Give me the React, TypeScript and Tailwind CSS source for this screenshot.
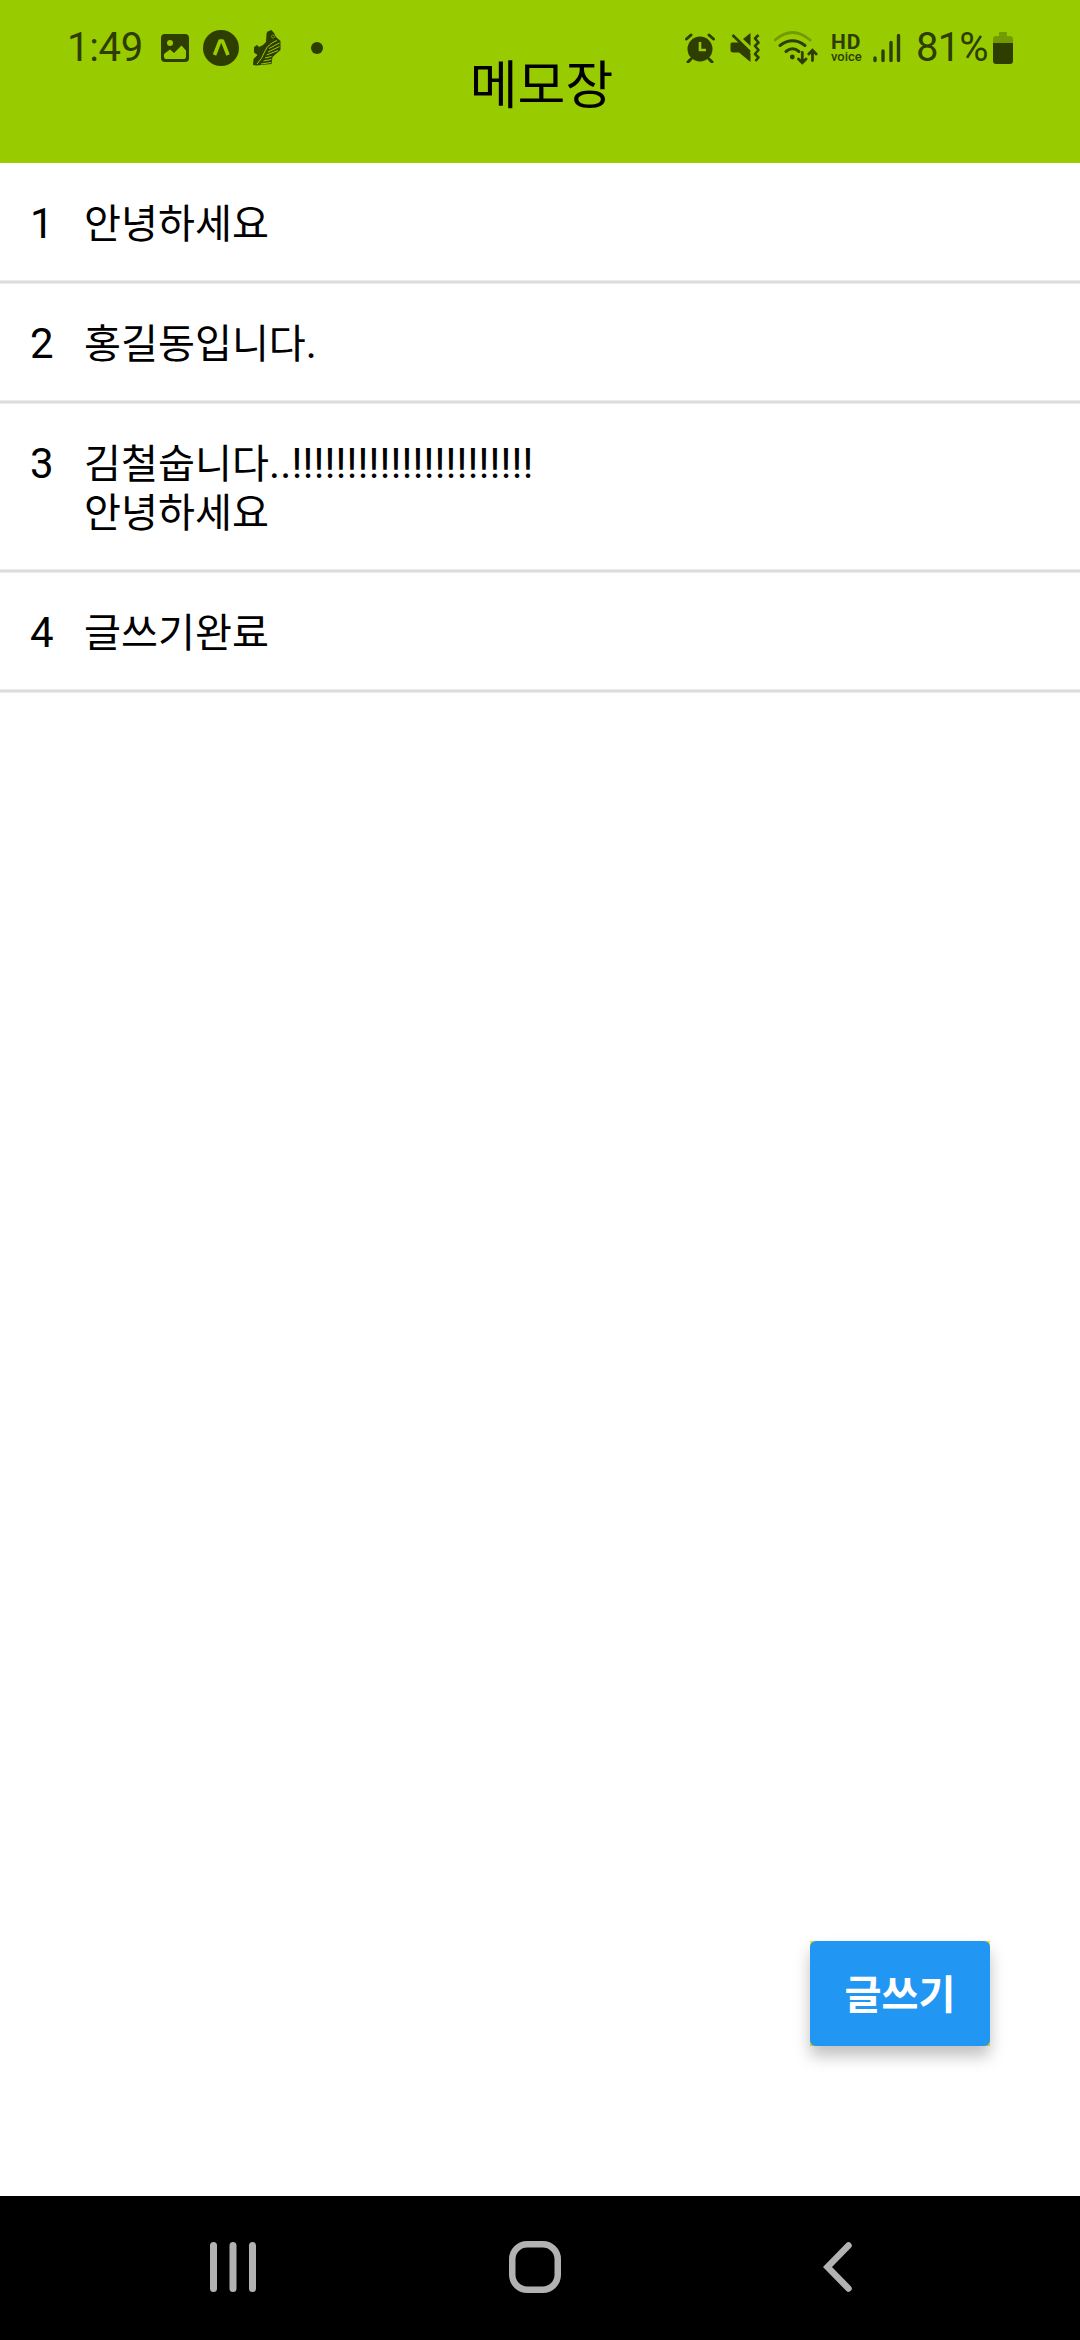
import React from "react";

const memos = [
  { id: 1, text: "안녕하세요", box: "h-[117px] pt-[36px]" },
  { id: 2, text: "홍길동입니다.", box: "h-[116px] pt-[35px]" },
  { id: 3, text: "김철숩니다..!!!!!!!!!!!!!!!!!!!!!!\n안녕하세요", box: "h-[165px] pt-[35px]" },
  { id: 4, text: "글쓰기완료", box: "h-[116px] pt-[35px]" },
];

const StatusLeft: React.FC = () => (
  <div className="flex items-center h-10">
    <span className="w-[94px] text-[40px] leading-10 tracking-[-0.3px]">1:49</span>
    {/* Gallery */}
    <svg className="w-7 h-7 mr-[14px]" viewBox="0 0 28 28">
      <rect width="28" height="28" rx="4" fill="currentColor" />
      <circle cx="9" cy="9" r="3" fill="#99cc00" />
      <path d="M3 20L9 15.500L13 19L20.500 11.500L25 16.500V23Q25 25 23 25H5Q3 25 3 23Z" fill="#99cc00" />
    </svg>
    {/* Expo */}
    <svg className="w-9 h-9 mr-[14px]" viewBox="0 0 36 36">
      <circle cx="18" cy="18" r="18" fill="currentColor" />
      <path d="M11.500 25L17 11H19.500L25 25" fill="none" stroke="#99cc00" strokeWidth="3.600" strokeLinejoin="round" />
    </svg>
    {/* Running shoe */}
    <svg className="w-7 h-9 mr-[30px]" viewBox="0 0 28 36">
      <path
        d="M13.500 4Q14 1 16 1L18.500 0L21 3L23 7L27.500 11V20L19.500 27L18.500 34L3.500 35.500L0 35L0.500 29L4.500 25L1 22.500V17L4 15L6 17L10 15L13 12Z"
        fill="currentColor"
      />
      <path
        d="M24 10.500Q15 14 12 21Q9 29 4 34M16 18.500L26.500 13M15 22L26.500 16.500M13.500 25L25 20.500M12 28L18.500 26.500M10.500 31L18.500 29.500M8 34L18 32.500"
        fill="none"
        stroke="#99cc00"
        strokeWidth="1"
      />
      <circle cx="20" cy="6.500" r="1.500" fill="none" stroke="#99cc00" strokeWidth="0.600" />
    </svg>
    <span className="w-3 h-3 rounded-full bg-current" />
  </div>
);

const StatusRight: React.FC = () => (
  <div className="flex items-center h-10">
    {/* Alarm */}
    <svg className="w-[30px] h-[30px] mr-[15px]" viewBox="0 0 30 30">
      <circle cx="15" cy="16" r="12.500" fill="currentColor" />
      <path d="M1.500 6L6 2M28.500 6L24 2M6 26L3 29M24 26L27 29" stroke="currentColor" strokeWidth="3" strokeLinecap="round" />
      <path d="M15 9V17H21" fill="none" stroke="#99cc00" strokeWidth="2.600" />
    </svg>
    {/* Vibrate, muted */}
    <svg className="w-[31px] h-[30px] mr-[13px]" viewBox="0 0 31 30">
      <path d="M0.500 11Q0.500 9.500 2 9.500H9L20.500 20V29L9 19.500H3Q0.500 19.500 0.500 17Z" fill="currentColor" />
      <path d="M13 6L20.500 0V13Z" fill="currentColor" />
      <path d="M2.500 2L20 19" stroke="currentColor" strokeWidth="2.600" />
      <path
        d="M28.500 2L25 5.500L28.500 9.500L25 13L28.500 17L25 21L28.500 24.500L25.500 28"
        fill="none"
        stroke="currentColor"
        strokeWidth="2.600"
        strokeLinejoin="round"
      />
    </svg>
    {/* Wi-Fi */}
    <svg className="w-[44px] h-[34px] mr-[13px]" viewBox="0 0 44 34">
      <path d="M1 9Q18.500 -6 36 9" fill="none" stroke="currentColor" strokeOpacity="0.35" strokeWidth="2.800" strokeLinecap="round" />
      <path d="M6 14.500Q18.500 5 31 14.500M12 20.500Q18.500 15 25 20.500" fill="none" stroke="currentColor" strokeWidth="3" strokeLinecap="round" />
      <circle cx="18.300" cy="26" r="2.400" fill="currentColor" />
      <path
        d="M28.300 21.500V31M24.500 28L28.300 31.800L32 28M38.500 29.500V19.500M34.800 23L38.500 19.200L42.200 23"
        fill="none"
        stroke="currentColor"
        strokeWidth="2.800"
        strokeLinecap="round"
      />
    </svg>
    <div className="flex flex-col w-[32px] mr-[10px]">
      <span className="text-[21px] leading-[18px] font-bold tracking-[1px]">HD</span>
      <span className="text-[13px] leading-[12px] font-medium">voice</span>
    </div>
    {/* Signal */}
    <svg className="w-[28px] h-[30px] mr-[15px]" viewBox="0 0 28 30">
      <path d="M2 25V27.500M10 18V27.500M18 9.500V27.500M25.500 2.500V27.500" stroke="currentColor" strokeWidth="3.400" strokeLinecap="round" />
    </svg>
    <span className="w-[77px] text-[40px] leading-10 tracking-[-0.8px]">81%</span>
    {/* Battery */}
    <svg className="w-5 h-[32px]" viewBox="0 0 20 32">
      <path d="M0 11V7Q0 4 3 4H6V1Q6 0 7 0H13Q14 0 14 1V4H17Q20 4 20 7V11Z" fill="currentColor" fillOpacity="0.35" />
      <path d="M0 11H20V29Q20 32 17 32H3Q0 32 0 29Z" fill="currentColor" />
    </svg>
  </div>
);

const Header: React.FC = () => (
  <header className="relative h-[163px] bg-[#99cc00]">
    <div className="flex justify-between pt-7 pl-[67px] pr-[67px] text-[#2e3d00]">
      <StatusLeft />
      <StatusRight />
    </div>
    <h1 className="absolute inset-x-0 top-[47px] pl-[3px] text-center text-[52px] leading-[80px]">메모장</h1>
  </header>
);

// Hangul is set slightly smaller than the Latin punctuation next to it
const MemoText: React.FC<{ text: string }> = ({ text }) => (
  <p className="whitespace-pre">
    {text.split(/([.!]+)/).map((part, i) =>
      /^[.!]/.test(part) ? (
        <span key={i} className="tracking-[0.18px]">
          {part}
        </span>
      ) : (
        <span key={i} className="text-[40.200px] leading-none">
          {part}
        </span>
      )
    )}
  </p>
);

const NavigationBar: React.FC = () => (
  <nav className="flex items-center h-36 pb-[2px] bg-black text-[#b2b2b2]">
    <svg className="w-[46px] h-[50px] ml-[210px]" viewBox="0 0 46 50">
      <path d="M3.500 3.500V46.500M23 3.500V46.500M42.500 3.500V46.500" stroke="currentColor" strokeWidth="7" strokeLinecap="round" />
    </svg>
    <svg className="w-[52px] h-[52px] ml-[253px]" viewBox="0 0 52 52">
      <rect x="3.250" y="3.250" width="45.500" height="45.500" rx="15" fill="none" stroke="currentColor" strokeWidth="6.500" />
    </svg>
    <svg className="w-[30px] h-[50px] ml-[262px]" viewBox="0 0 30 50">
      <path d="M25.500 3.500L4.500 25L25.500 46.500" fill="none" stroke="currentColor" strokeWidth="6.500" strokeLinecap="round" />
    </svg>
  </nav>
);

const App: React.FC = () => {
  return (
    <div className="flex flex-col w-[1080px] h-[2340px] bg-white text-black font-[Roboto,'Noto_Sans_CJK_KR',sans-serif]">
      <Header />

      {/* Memo list */}
      <main className="flex-1">
        {memos.map((memo) => (
          <div key={memo.id}>
            <div className={`flex pl-[30px] text-[42px] leading-[49px] ${memo.box}`}>
              <span className="w-[54px]">{memo.id}</span>
              <MemoText text={memo.text} />
            </div>
            <div className="h-1 bg-[#dcdcdc] border-y border-[#ebebeb]" />
          </div>
        ))}
      </main>

      <div className="flex justify-end pr-[90px] pb-[150px]">
        <div className="bg-[#e6e63c]">
          <button className="block w-[180px] h-[105px] pt-[5px] rounded-[6px] bg-[#2196f3] text-white text-[40.200px] font-bold shadow-[0_10px_16px_rgba(0,0,0,0.25)]">
            글쓰기
          </button>
        </div>
      </div>

      <NavigationBar />
    </div>
  );
};

export default App;
